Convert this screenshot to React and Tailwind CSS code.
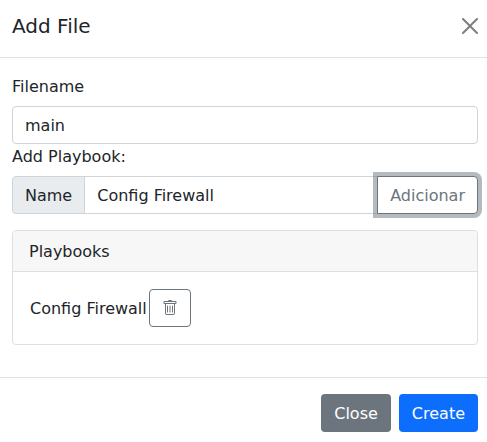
import React from "react";

function CloseIcon() {
  return (
    <svg width="16" height="16" viewBox="0 0 16 16" fill="#000" className="opacity-50">
      <path d="M.293.293a1 1 0 011.414 0L8 6.586 14.293.293a1 1 0 111.414 1.414L9.414 8l6.293 6.293a1 1 0 01-1.414 1.414L8 9.414l-6.293 6.293a1 1 0 01-1.414-1.414L6.586 8 .293 1.707a1 1 0 010-1.414z" />
    </svg>
  );
}

function TrashIcon() {
  return (
    <svg width="16" height="16" viewBox="0 0 16 16" fill="currentColor">
      <path d="M5.5 5.5A.5.5 0 0 1 6 6v6a.5.5 0 0 1-1 0V6a.5.5 0 0 1 .5-.5m2.5 0a.5.5 0 0 1 .5.5v6a.5.5 0 0 1-1 0V6a.5.5 0 0 1 .5-.5m3 .5a.5.5 0 0 0-1 0v6a.5.5 0 0 0 1 0z" />
      <path d="M14.5 3a1 1 0 0 1-1 1H13v9a2 2 0 0 1-2 2H5a2 2 0 0 1-2-2V4h-.5a1 1 0 0 1-1-1V2a1 1 0 0 1 1-1H6a1 1 0 0 1 1-1h2a1 1 0 0 1 1 1h3.5a1 1 0 0 1 1 1zM4.118 4 4 4.059V13a1 1 0 0 0 1 1h6a1 1 0 0 0 1-1V4.059L11.882 4zM2.5 3h11V2h-11z" />
    </svg>
  );
}

export default function App() {
  return (
    <div className="h-[442px] w-[487px] overflow-hidden bg-white font-['DejaVu_Sans',sans-serif] text-base leading-6 text-[#212529]">
      <header className="flex h-[58px] items-start justify-between border-b border-[#dee2e6] pt-[11px] pr-[9px] pl-3">
        <h5 className="text-xl leading-[30px]">Add File</h5>
        <button type="button" aria-label="Close" className="mt-[7px]">
          <CloseIcon />
        </button>
      </header>

      <main className="pt-4 pr-[9px] pb-4 pl-3">
        <label htmlFor="filename" className="mb-[7px] block pt-px">Filename</label>
        <input
          id="filename"
          defaultValue="main"
          className="block h-[38px] w-full rounded border border-[#ced4da] px-3 outline-none"
        />
        <label htmlFor="playbook" className="mb-[7px] block pt-px">Add Playbook:</label>
        <div className="mb-4 flex h-[38px]">
          <span className="flex items-center rounded-l border border-[#ced4da] bg-[#e9ecef] px-3 pt-0.5">Name</span>
          <input
            id="playbook"
            defaultValue="Config Firewall"
            className="-ml-px min-w-0 flex-1 border border-[#ced4da] px-3 pt-0.5 outline-none"
          />
          <button
            type="button"
            className="relative -ml-px rounded-r border border-[#6c757d] bg-white px-3 pt-0.5 text-[#6c757d] ring-4 ring-[#6c757d]/50"
          >
            Adicionar
          </button>
        </div>

        <section className="mb-4 rounded border border-[#dfdfdf]">
          <div className="rounded-t-[3px] border-b border-[#dfdfdf] bg-[#f7f7f7] px-4 pt-[9px] pb-[7px]">Playbooks</div>
          <div className="flex items-center gap-0.5 p-[17px]">
            <span className="pt-0.5">Config Firewall</span>
            <button
              type="button"
              aria-label="Delete"
              className="flex h-[38px] w-[42px] items-center justify-center rounded border border-[#6c757d] text-[#6c757d]"
            >
              <TrashIcon />
            </button>
          </div>
        </section>
      </main>

      <footer className="flex justify-end gap-2 border-t border-[#dee2e6] pt-4 pr-[9px]">
        <button type="button" className="h-[38px] rounded bg-[#6c757d] px-[13px] pt-0.5 text-white">Close</button>
        <button type="button" className="h-[38px] rounded bg-[#0d6efd] px-[13px] pt-0.5 text-white">Create</button>
      </footer>
    </div>
  );
}
